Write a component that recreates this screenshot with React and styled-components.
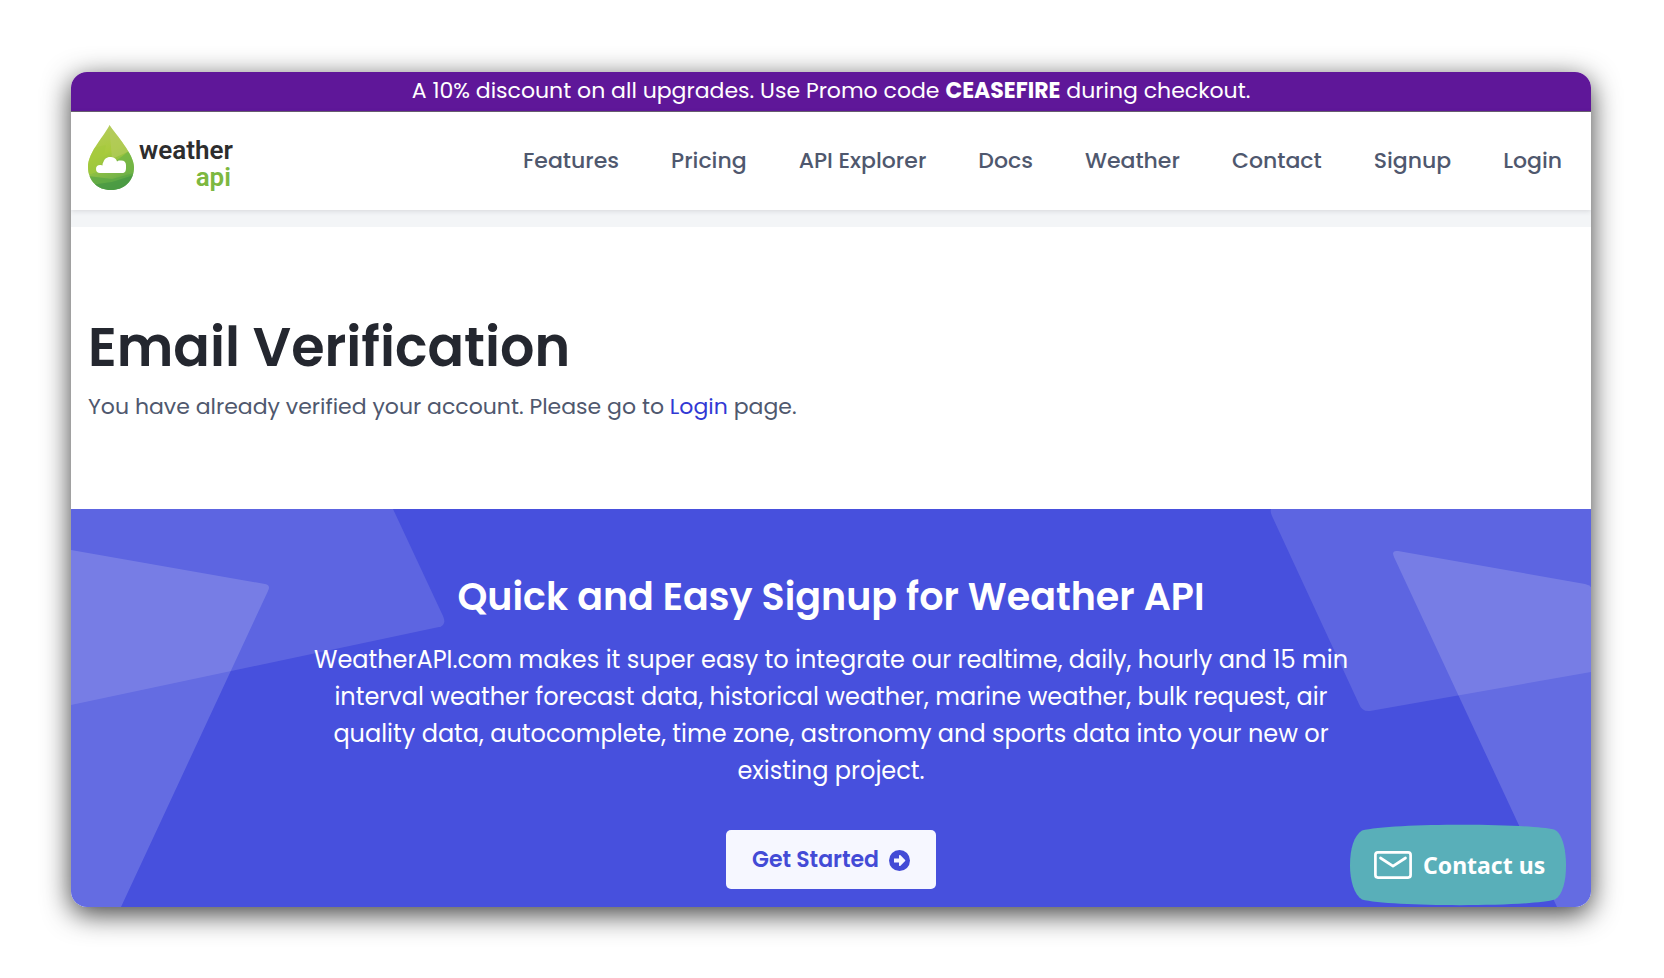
import React from "react";
import styled, { createGlobalStyle } from "styled-components";

const GlobalStyle = createGlobalStyle`
  *, *::before, *::after { box-sizing: border-box; }
  body {
    margin: 0;
    background: #ffffff;
    font-family: Poppins, Inter, "Open Sans", sans-serif;
    font-size: 22px;
    line-height: 32px;
    color: #4f586e;
  }
`;

const Page = styled.div`
  padding: 72px 73px 71px 71px;
`;

const Frame = styled.div`
  border-radius: 16px;
  box-shadow: 0 7px 28px rgba(0, 0, 0, 0.76);
`;

const Window = styled.div`
  position: relative;
  overflow: hidden;
  border-radius: 16px;
  background: #ffffff;
`;

const Promo = styled.p`
  margin: 0;
  padding: 3px 24px 4px;
  border-bottom: 1px solid #6a6070;
  background: #5f1799;
  color: #ffffff;
  text-align: center;
`;

const Header = styled.header`
  position: relative;
  display: flex;
  align-items: center;
  justify-content: space-between;
  padding: 13px 29px 13px 17px;
  background: #ffffff;
  box-shadow: 0 1px 5px rgba(60, 65, 75, 0.16);
`;

const LogoLink = styled.a`
  display: block;
  line-height: 0;
`;

const Nav = styled.nav`
  display: flex;
  gap: 52px;
`;

const NavLink = styled.a`
  color: #4f586e;
  font-weight: 500;
  text-decoration: none;
`;

const Strip = styled.div`
  height: 17px;
  background: #f3f5f7;
`;

const Verification = styled.section`
  padding: 84px 17px 86px;
`;

const Title = styled.h1`
  margin: 0 0 8px;
  color: #24272f;
  font-size: 54px;
  font-weight: 600;
  line-height: 72px;
`;

const Message = styled.p`
  margin: 0;
`;

const InlineLink = styled.a`
  color: #3138d4;
  text-decoration: none;
`;

const Callout = styled.section`
  position: relative;
  padding: 60px 24px 18px;
  background: #4750dd;
  color: #ffffff;
  text-align: center;
`;

const Shapes = styled.svg`
  position: absolute;
  top: 0;
  ${({ $side }) => $side}: 0;
  width: 400px;
  height: 100%;
`;

const CalloutBody = styled.div`
  position: relative;
  display: flex;
  flex-direction: column;
  align-items: center;
`;

const CalloutTitle = styled.h2`
  margin: 0;
  font-size: 38px;
  font-weight: 600;
  line-height: 56px;
`;

const CalloutText = styled.p`
  max-width: 1080px;
  margin: 16px 0 41px;
  font-size: 24px;
  line-height: 37px;
`;

const StartButton = styled.button`
  display: flex;
  align-items: center;
  gap: 10px;
  padding: 14px 26px 13px;
  border: 0;
  border-radius: 5px;
  background: #f6f7ff;
  color: #434bd6;
  font: inherit;
  font-weight: 600;
`;

const ContactButton = styled.button`
  position: absolute;
  right: 25px;
  bottom: 1px;
  display: flex;
  align-items: center;
  gap: 11px;
  width: 216px;
  height: 82px;
  padding: 0 0 0 24px;
  border: 0;
  background: transparent;
  color: #ffffff;
  font-family: "Noto Sans", "Open Sans", sans-serif;
  font-size: 23px;
  font-weight: 700;
  white-space: nowrap;
`;

const ContactShape = styled.svg`
  position: absolute;
  inset: 0;
`;

const ContactIcon = styled.svg`
  position: relative;
  flex: none;
`;

const ContactLabel = styled.span`
  position: relative;
`;

const LogoWord = styled.text`
  font-family: Roboto, "Open Sans", sans-serif;
  font-size: 26px;
  font-weight: 600;
`;

const links = [
  "Features",
  "Pricing",
  "API Explorer",
  "Docs",
  "Weather",
  "Contact",
  "Signup",
  "Login",
];

function Logo() {
  return (
    <svg width="149" height="72" viewBox="0 0 149 72" role="img" aria-label="weather api">
      <defs>
        <linearGradient id="drop" x1="0.3" y1="0" x2="0.6" y2="1">
          <stop offset="0" stopColor="#b4cb5c" />
          <stop offset="0.4" stopColor="#a9cb3c" />
          <stop offset="0.75" stopColor="#7ab648" />
          <stop offset="1" stopColor="#4f9c43" />
        </linearGradient>
        <clipPath id="dropClip">
          <path d="M21.500 0C17 10 0 27 0 42C0 56 10 65 23 65C36 65 46 56 46 42C46 29 28 10 21.500 0Z" />
        </clipPath>
      </defs>
      <g clipPath="url(#dropClip)">
        <rect width="46" height="68" fill="url(#drop)" />
        <path d="M21 0L46 24L24 34Z" fill="#b5cc62" opacity="0.6" />
        <path d="M46 22L28 36L46 54Z" fill="#6fb544" opacity="0.7" />
        <path d="M0 24L18 20L12 46L0 50Z" fill="#a4c93c" opacity="0.6" />
        <path d="M0 51L24 54L46 48V68H0Z" fill="#58a744" opacity="0.7" />
        <path d="M2 60L24 57L46 50V68H8Z" fill="#3f9243" opacity="0.55" />
      </g>
      <path
        d="M12 48H34C37 48 38 46 38 43V40C38 37 36 35 32 35.500C30.500 35.500 29.500 36 29 36.500C28 33 25 32 22 32C18.500 32 16 34.500 15.500 37C14.500 38 14.500 39.500 14.500 40.500C14 40 13 39.800 12 40C9.500 40 8 41.500 8 44C8 46.500 9.500 48 12 48Z"
        fill="#ffffff"
      />
      <LogoWord x="51" y="34" fill="#2d2d2e">
        weather
      </LogoWord>
      <LogoWord x="143" y="61" textAnchor="end" fill="#7db840">
        api
      </LogoWord>
    </svg>
  );
}

function ArrowCircle() {
  return (
    <svg width="21" height="21" viewBox="0 0 21 21" aria-hidden="true">
      <circle cx="10.500" cy="10.500" r="10.500" fill="#434bd6" />
      <path
        d="M5 8.500H10V5.800C10 4.900 10.900 4.600 11.500 5.200L16.100 9.900C16.500 10.200 16.500 10.800 16.100 11.100L11.500 15.800C10.900 16.400 10 16.100 10 15.200V12.500H5Z"
        fill="#f6f7ff"
      />
    </svg>
  );
}

export default function App() {
  return (
    <Page>
      <GlobalStyle />
      <Frame>
        <Window>
          <Promo>
            A 10% discount on all upgrades. Use Promo code <strong>CEASEFIRE</strong> during checkout.
          </Promo>
          <Header>
            <LogoLink href="#home">
              <Logo />
            </LogoLink>
            <Nav>
              {links.map((label) => (
                <NavLink key={label} href={`#${label.toLowerCase().replace(" ", "-")}`}>
                  {label}
                </NavLink>
              ))}
            </Nav>
          </Header>
          <Strip />
          <Verification>
            <Title>Email Verification</Title>
            <Message>
              You have already verified your account. Please go to{" "}
              <InlineLink href="#login">Login</InlineLink> page.
            </Message>
          </Verification>
          <Callout>
            <Shapes $side="left" viewBox="0 0 400 398" preserveAspectRatio="xMinYMin slice" aria-hidden="true">
              <path d="M0 0H322L372 107Q376 116 368 118L0 196Z" fill="#fff" fillOpacity="0.12" />
              <path d="M0 41L194 75Q200 76 197 82L50 398H0Z" fill="#fff" fillOpacity="0.16" />
            </Shapes>
            <Shapes $side="right" viewBox="0 0 400 398" preserveAspectRatio="xMaxYMin slice" aria-hidden="true">
              <path d="M80 0Q79 3 81 7L168 195Q171 203 179 202L400 163V0Z" fill="#fff" fillOpacity="0.12" />
              <path d="M207 42L394 75Q398 76 400 78V398H366L203 48Q200 41 207 42Z" fill="#fff" fillOpacity="0.16" />
            </Shapes>
            <CalloutBody>
              <CalloutTitle>Quick and Easy Signup for Weather API</CalloutTitle>
              <CalloutText>
                WeatherAPI.com makes it super easy to integrate our realtime, daily, hourly and 15 min
                interval weather forecast data, historical weather, marine weather, bulk request, air
                quality data, autocomplete, time zone, astronomy and sports data into your new or
                existing project.
              </CalloutText>
              <StartButton type="button">
                Get Started
                <ArrowCircle />
              </StartButton>
            </CalloutBody>
          </Callout>
          <ContactButton type="button">
            <ContactShape width="216" height="82" viewBox="0 0 216 81" aria-hidden="true">
              <path
                d="M12 6C40 -1.500 176 -1.500 204 5C212 8 216 24 216 41C216 56 213 70 205 75C180 82.500 40 82.500 12 75C4 70 0 56 0 41C0 24 4 11 12 6Z"
                fill="#59afb9"
              />
            </ContactShape>
            <ContactIcon width="38" height="28" viewBox="0 0 38 28" fill="none" stroke="#fff" strokeWidth="2.700" aria-hidden="true">
              <rect x="1.400" y="1.400" width="35.200" height="25.200" rx="2.500" />
              <path d="M6.500 7L19 15.200L31.500 7" strokeLinecap="round" strokeLinejoin="round" />
            </ContactIcon>
            <ContactLabel>Contact us</ContactLabel>
          </ContactButton>
        </Window>
      </Frame>
    </Page>
  );
}
